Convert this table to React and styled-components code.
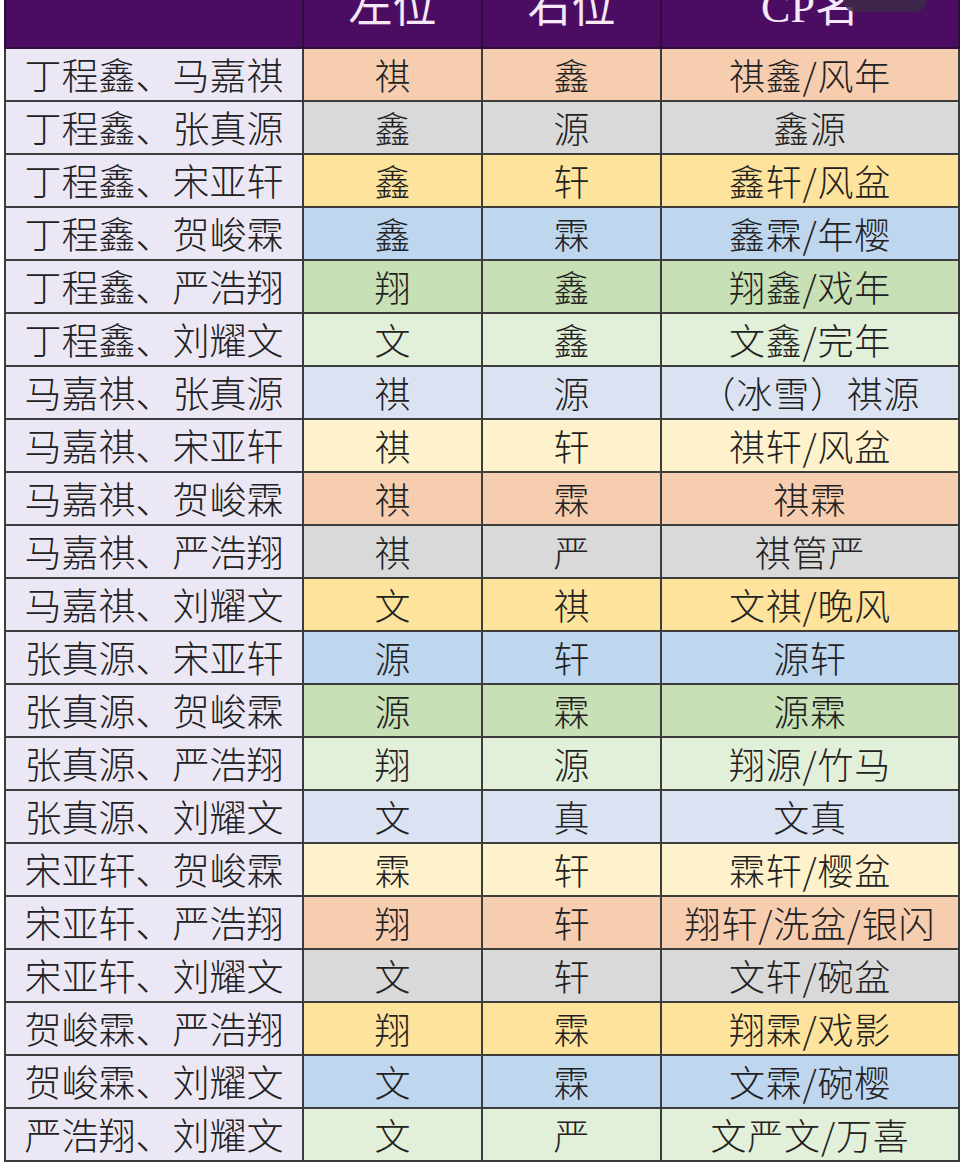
import React from 'react';
import styled, { createGlobalStyle } from 'styled-components';

const GlobalStyle = createGlobalStyle`
  html, body {
    margin: 0;
    padding: 0;
    background: #fff;
  }
  body {
    font-family: "Noto Sans CJK SC", "Noto Sans", sans-serif;
  }
`;

const palette = {
  peach: '#f7cdb0',
  gray: '#d9d9d9',
  yellow: '#fde39b',
  blue: '#bed6ee',
  green: '#c8e0b6',
  mint: '#e2efd9',
  lilac: '#dbe3f2',
  cream: '#fef2cc',
};

const rows = [
  ['丁程鑫、马嘉祺', '祺', '鑫', '祺鑫/风年', 'peach'],
  ['丁程鑫、张真源', '鑫', '源', '鑫源', 'gray'],
  ['丁程鑫、宋亚轩', '鑫', '轩', '鑫轩/风盆', 'yellow'],
  ['丁程鑫、贺峻霖', '鑫', '霖', '鑫霖/年樱', 'blue'],
  ['丁程鑫、严浩翔', '翔', '鑫', '翔鑫/戏年', 'green'],
  ['丁程鑫、刘耀文', '文', '鑫', '文鑫/完年', 'mint'],
  ['马嘉祺、张真源', '祺', '源', '（冰雪）祺源', 'lilac'],
  ['马嘉祺、宋亚轩', '祺', '轩', '祺轩/风盆', 'cream'],
  ['马嘉祺、贺峻霖', '祺', '霖', '祺霖', 'peach'],
  ['马嘉祺、严浩翔', '祺', '严', '祺管严', 'gray'],
  ['马嘉祺、刘耀文', '文', '祺', '文祺/晚风', 'yellow'],
  ['张真源、宋亚轩', '源', '轩', '源轩', 'blue'],
  ['张真源、贺峻霖', '源', '霖', '源霖', 'green'],
  ['张真源、严浩翔', '翔', '源', '翔源/竹马', 'mint'],
  ['张真源、刘耀文', '文', '真', '文真', 'lilac'],
  ['宋亚轩、贺峻霖', '霖', '轩', '霖轩/樱盆', 'cream'],
  ['宋亚轩、严浩翔', '翔', '轩', '翔轩/洗盆/银闪', 'peach'],
  ['宋亚轩、刘耀文', '文', '轩', '文轩/碗盆', 'gray'],
  ['贺峻霖、严浩翔', '翔', '霖', '翔霖/戏影', 'yellow'],
  ['贺峻霖、刘耀文', '文', '霖', '文霖/碗樱', 'blue'],
  ['严浩翔、刘耀文', '文', '严', '文严文/万喜', 'mint'],
];

const Viewport = styled.div`
  position: relative;
  width: 960px;
  height: 1174px;
  overflow: hidden;
  background: #fff;
`;

const Table = styled.table`
  margin: -33px 0 0 4px;
  width: 954px;
  table-layout: fixed;
  border-collapse: collapse;
  border: 2px solid #3a3a3a;
`;

const HeadCell = styled.th`
  height: 78px;
  padding: 0;
  background: #4b0d62;
  color: #f6e8f6;
  font-family: "Liberation Serif", "Noto Sans CJK SC", serif;
  font-weight: 400;
  font-size: 44px;
  line-height: 1;
  text-align: center;
  border: 2px solid #2e0d3a;
`;

const Cell = styled.td`
  height: 51px;
  padding: 0;
  background: ${p => p.$bg};
  color: #222;
  font-size: ${p => (p.$name ? '37px' : '36px')};
  font-weight: 300;
  line-height: 51px;
  letter-spacing: ${p => (p.$wide ? '0.8px' : '0')};
  text-align: center;
  white-space: nowrap;
  border: 2px solid #3c3c3c;
`;

const StatusPill = styled.div`
  position: absolute;
  top: -14px;
  left: 843px;
  width: 84px;
  height: 26px;
  border-radius: 13px;
  background: #3b2c45;
  opacity: 0.85;
`;

export default function App() {
  return (
    <Viewport>
      <GlobalStyle />
      <Table>
        <colgroup>
          <col style={{ width: 298 }} />
          <col style={{ width: 179 }} />
          <col style={{ width: 179 }} />
          <col style={{ width: 298 }} />
        </colgroup>
        <thead>
          <tr>
            <HeadCell />
            <HeadCell>左位</HeadCell>
            <HeadCell>右位</HeadCell>
            <HeadCell>CP名</HeadCell>
          </tr>
        </thead>
        <tbody>
          {rows.map(([pair, left, right, name, tone]) => (
            <tr key={pair}>
              <Cell $bg="#ece7f5" $name>{pair}</Cell>
              <Cell $bg={palette[tone]}>{left}</Cell>
              <Cell $bg={palette[tone]}>{right}</Cell>
              <Cell $bg={palette[tone]} $wide>{name}</Cell>
            </tr>
          ))}
        </tbody>
      </Table>
      <StatusPill />
    </Viewport>
  );
}
